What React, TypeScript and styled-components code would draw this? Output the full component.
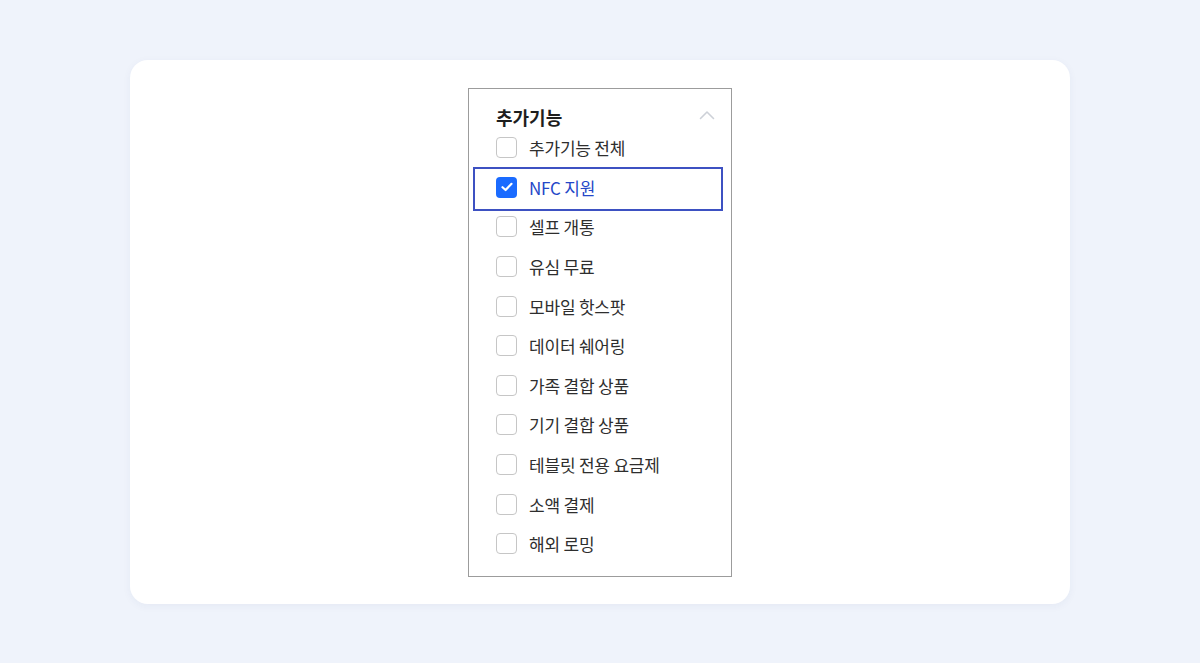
import styled, { createGlobalStyle } from "styled-components"

const GlobalStyle = createGlobalStyle`
  html, body {
    margin: 0;
    padding: 0;
    background: #eff3fb;
    font-family: "Noto Sans CJK KR", "Noto Sans", sans-serif;
  }`

const Page = styled.div`
  width: 1200px;
  height: 663px;
  padding-top: 60px;
  box-sizing: border-box;
  display: flex;
  justify-content: center;`

const Card = styled.div`
  width: 940px;
  height: 544px;
  background: #ffffff;
  border-radius: 18px;
  box-shadow: 0 2px 8px rgba(40, 60, 120, 0.05);
  padding-top: 28px;
  box-sizing: border-box;
  display: flex;
  justify-content: center;
  align-items: flex-start;`

const Panel = styled.section`
  width: 264px;
  height: 489px;
  border: 1px solid #9c9c9c;
  box-sizing: border-box;
  padding-top: 17px;`

const TitleRow = styled.div`
  display: flex;
  align-items: center;
  justify-content: space-between;
  height: 22px;
  padding: 0 16px 0 27px;`

const Title = styled.h2`
  margin: 0;
  font-size: 18px;
  font-weight: 700;
  color: #1e1e1e;
  letter-spacing: 0;`

const Chevron = styled.svg`
  display: block;
  margin-bottom: 4px;`

const List = styled.ul`
  list-style: none;
  margin: 0;
  padding: 0;`

const Row = styled.li<{ $focused?: boolean }>`
  position: relative;
  display: flex;
  align-items: center;
  gap: 12px;
  height: 39.6px;
  width: 246px;
  margin-left: 6px;
  padding-left: 21px;
  box-sizing: border-box;

  &::after {
    content: "";
    display: ${p => (p.$focused ? "block" : "none")};
    position: absolute;
    top: -1px;
    bottom: -3.5px;
    left: -2px;
    right: -2px;
    border: 2px solid #3d51c2;
    pointer-events: none;
  }`

const Box = styled.span<{ $checked?: boolean }>`
  width: 21px;
  height: 21px;
  box-sizing: border-box;
  border-radius: 4px;
  border: ${p => (p.$checked ? "none" : "1.5px solid #c6c6c6")};
  background: ${p => (p.$checked ? "#1a6bff" : "#ffffff")};
  display: flex;
  align-items: center;
  justify-content: center;
  flex-shrink: 0;`

const Label = styled.span<{ $checked?: boolean }>`
  font-size: 17px;
  color: ${p => (p.$checked ? "#2447c8" : "#2e2e2e")};
  letter-spacing: -0.2px;`

const items = [
  "추가기능 전체",
  "NFC 지원",
  "셀프 개통",
  "유심 무료",
  "모바일 핫스팟",
  "데이터 쉐어링",
  "가족 결합 상품",
  "기기 결합 상품",
  "테블릿 전용 요금제",
  "소액 결제",
  "해외 로밍",
]

export default function App() {
  return (
    <>
      <GlobalStyle />
      <Page>
        <Card>
          <Panel>
            <TitleRow>
              <Title>추가기능</Title>
              <Chevron width="16" height="10" viewBox="0 0 16 10">
                <path d="M1.5 8.5 L8 2 L14.5 8.5" fill="none" stroke="#cdd1d8" strokeWidth="1.6" strokeLinecap="round" strokeLinejoin="round" />
              </Chevron>
            </TitleRow>
            <List>
              {items.map(item => {
                const checked = item === "NFC 지원"
                return (
                  <Row key={item} $focused={checked}>
                    <Box $checked={checked}>
                      {checked && (
                        <svg width="12" height="10" viewBox="0 0 12 10">
                          <path d="M1.5 5.2 L4.6 8 L10.5 1.8" fill="none" stroke="#fff" strokeWidth="2.2" strokeLinecap="round" strokeLinejoin="round" />
                        </svg>
                      )}
                    </Box>
                    <Label $checked={checked}>{item}</Label>
                  </Row>
                )
              })}
            </List>
          </Panel>
        </Card>
      </Page>
    </>
  )
}
